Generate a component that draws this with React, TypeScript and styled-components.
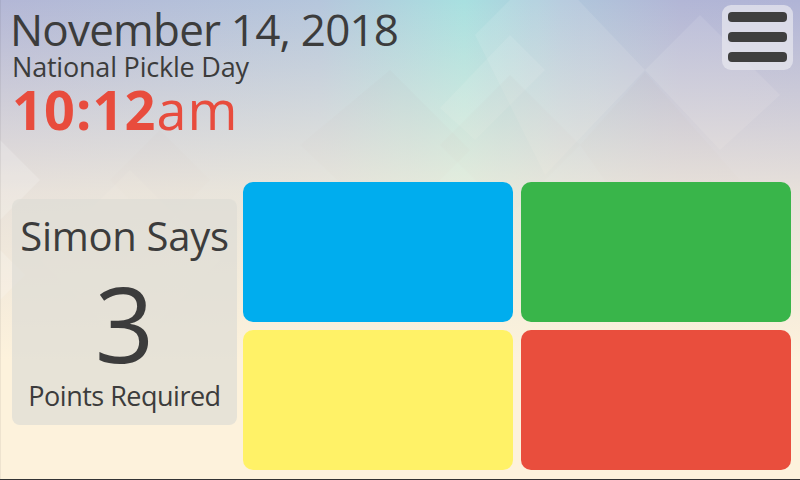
import React from "react";
import styled, { createGlobalStyle } from "styled-components";

const GlobalStyle = createGlobalStyle`
  html, body {
    margin: 0;
    padding: 0;
    background: #fdf2dc;
  }
  * {
    box-sizing: border-box;
  }
`;

// 배경 다이아몬드 패턴
const Backdrop = () => (
  <BackdropSvg viewBox="0 0 800 480" preserveAspectRatio="none">
    <defs>
      <linearGradient id="top" x1="0" y1="0" x2="1" y2="0">
        <stop offset="0" stopColor="#b3b7d6" />
        <stop offset="0.4" stopColor="#b5c6dc" />
        <stop offset="0.58" stopColor="#a8e0e0" />
        <stop offset="0.7" stopColor="#b0c8dc" />
        <stop offset="0.85" stopColor="#b2b6d6" />
        <stop offset="1" stopColor="#b0b4d6" />
      </linearGradient>
      <linearGradient id="fade" x1="0" y1="0" x2="0" y2="1">
        <stop offset="0" stopColor="#fdf2dc" stopOpacity="0" />
        <stop offset="0.4" stopColor="#fdf2dc" stopOpacity="0.72" />
        <stop offset="0.75" stopColor="#fdf2dc" stopOpacity="1" />
        <stop offset="1" stopColor="#fdf2dc" stopOpacity="1" />
      </linearGradient>
    </defs>
    <rect x="0" y="0" width="800" height="480" fill="url(#top)" />
    <g fill="#ffffff" fillOpacity="0.1">
      <polygon points="475,35 545,-35 645,70 545,175" />
      <polygon points="440,108 510,35 545,70 475,140" />
      <polygon points="645,70 700,15 780,95 720,150" />
      <polygon points="40,260 130,170 220,260 130,350" />
    </g>
    <g fill="#9c8ea0" fillOpacity="0.07">
      <polygon points="580,145 645,72 740,180 660,260" />
      <polygon points="300,145 390,70 470,150 390,230" />
      <polygon points="110,180 160,130 210,180 160,230" />
      <polygon points="620,270 710,180 800,270 710,360" />
      <polygon points="440,145 510,75 580,145 510,215" />
    </g>
    <rect x="0" y="0" width="800" height="480" fill="url(#fade)" />
    <g fill="#ffffff" fillOpacity="0.18">
      <polygon points="0,220 40,180 0,140" />
      <polygon points="0,300 25,275 0,250" />
    </g>
    <rect x="0" y="0" width="1" height="480" fill="#000" fillOpacity="0.06" />
    <rect x="0" y="479" width="800" height="1" fill="#333" />
  </BackdropSvg>
);

const MenuIcon = () => (
  <svg width="60" height="65" viewBox="0 0 60 65">
    <rect x="0" y="7" width="59" height="10" rx="4" fill="#3f3f3f" />
    <rect x="0" y="27" width="59" height="10" rx="4" fill="#3f3f3f" />
    <rect x="0" y="47" width="59" height="10" rx="4" fill="#3f3f3f" />
  </svg>
);

const App = () => {
  const pads = [
    { id: "blue", color: "#00adee" },
    { id: "green", color: "#39b54a" },
    { id: "yellow", color: "#fff267" },
    { id: "red", color: "#e94e3d" },
  ];

  return (
    <>
      <GlobalStyle />
      <Screen>
        <Backdrop />
        <Header>
          <DateBlock>
            <DateText>November 14, 2018</DateText>
            <HolidayText>National Pickle Day</HolidayText>
            <TimeText>
              <b>10:12</b>am
            </TimeText>
          </DateBlock>
          <MenuButton aria-label="menu">
            <MenuIcon />
          </MenuButton>
        </Header>
        <Main>
          <ScoreCard>
            <CardTitle>Simon Says</CardTitle>
            <CardNumber>3</CardNumber>
            <CardLabel>Points Required</CardLabel>
          </ScoreCard>
          <PadGrid>
            {pads.map((p) => (
              <Pad key={p.id} $color={p.color} />
            ))}
          </PadGrid>
        </Main>
      </Screen>
    </>
  );
};

export default App;

const Screen = styled.div`
  position: relative;
  width: 800px;
  height: 480px;
  overflow: hidden;
  font-family: "Open Sans", "Noto Sans", sans-serif;
  color: #3c3c3c;
  display: flex;
  flex-direction: column;
`;
const BackdropSvg = styled.svg`
  position: absolute;
  inset: 0;
  width: 800px;
  height: 480px;
  z-index: 0;
`;
const Header = styled.div`
  position: relative;
  z-index: 1;
  height: 182px;
  display: flex;
  justify-content: space-between;
  align-items: flex-start;
  padding: 5px 7px 0 12px;
`;
const DateBlock = styled.div`
  display: flex;
  flex-direction: column;
`;
const DateText = styled.div`
  font-size: 44px;
  line-height: 48px;
  margin-left: -2px;
  letter-spacing: -0.8px;
`;
const HolidayText = styled.div`
  font-size: 27px;
  line-height: 28px;
  letter-spacing: -0.2px;
`;
const TimeText = styled.div`
  font-size: 54px;
  line-height: 56px;
  color: #e84c3d;
  letter-spacing: 1.1px;
  b {
    font-weight: 700;
  }
`;
const MenuButton = styled.button`
  width: 71px;
  height: 65px;
  border: none;
  border-radius: 9px;
  background: rgba(232, 232, 238, 0.72);
  display: flex;
  align-items: flex-start;
  justify-content: center;
  padding: 0;
  cursor: pointer;
`;
const Main = styled.div`
  position: relative;
  z-index: 1;
  display: flex;
  align-items: flex-start;
  gap: 6px;
  padding: 0 9px 0 12px;
`;
const ScoreCard = styled.div`
  width: 225px;
  height: 226px;
  margin-top: 17px;
  border-radius: 8px;
  background: rgba(222, 220, 214, 0.72);
  display: flex;
  flex-direction: column;
  align-items: center;
`;
const CardTitle = styled.div`
  font-size: 40px;
  line-height: 40px;
  margin-top: 17px;
  letter-spacing: -0.3px;
  white-space: nowrap;
`;
const CardNumber = styled.div`
  font-size: 104px;
  line-height: 104px;
  margin-top: 15px;
`;
const CardLabel = styled.div`
  font-size: 27px;
  line-height: 28px;
  margin-top: 7px;
  letter-spacing: -0.5px;
  white-space: nowrap;
`;
const PadGrid = styled.div`
  flex: 1;
  display: grid;
  grid-template-columns: 1fr 1fr;
  grid-template-rows: 140px 140px;
  gap: 8px;
`;
const Pad = styled.div<{ $color: string }>`
  background: ${({ $color }) => $color};
  border-radius: 10px;
`;
